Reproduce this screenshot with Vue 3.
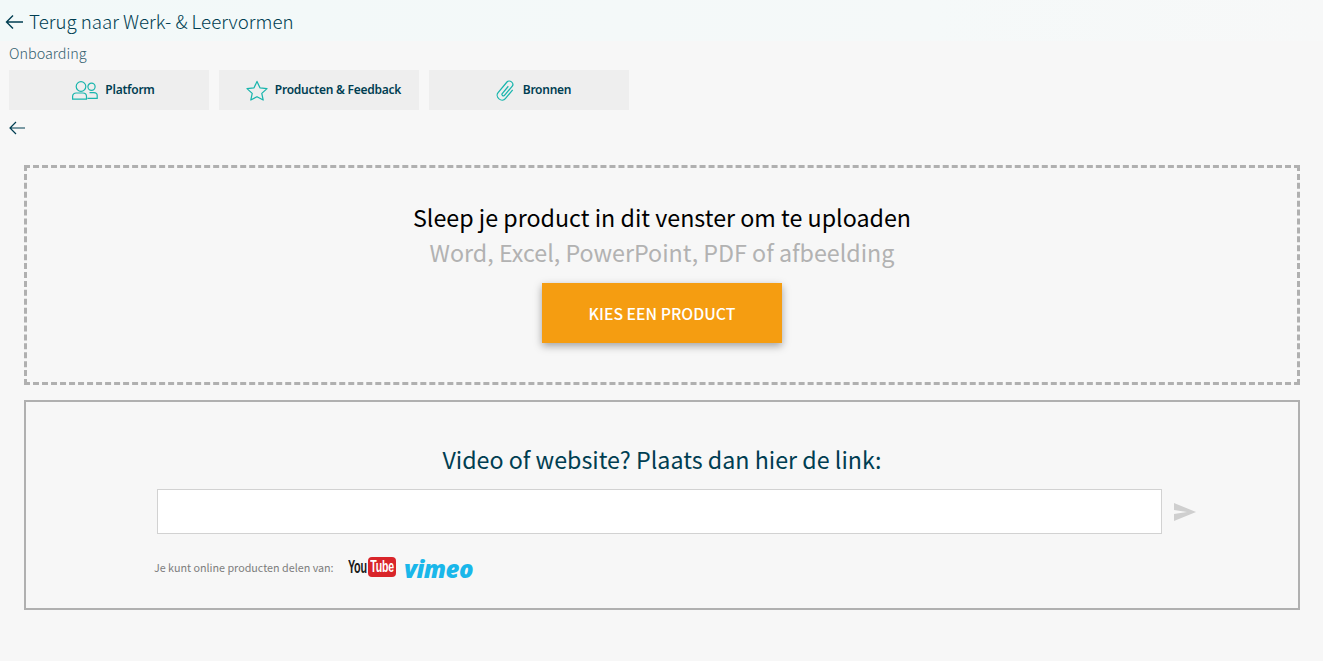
<script setup>
const tabs = [
  { label: 'Platform', icon: 'users' },
  { label: 'Producten & Feedback', icon: 'star' },
  { label: 'Bronnen', icon: 'clip' }
]
</script>

<template>
  <div class="page">
    <header class="top">
      <svg class="back-big" width="19" height="16" viewBox="0 0 19 16"><path d="M18 8H1.500M8 1.500 1.500 8 8 14.500" fill="none" stroke="#003e52" stroke-width="1.400"/></svg>
      <span class="top-link">Terug naar Werk- &amp; Leervormen</span>
    </header>
    <div class="crumb">Onboarding</div>
    <nav class="tabs">
      <div v-for="t in tabs" :key="t.label" class="tab">
        <svg v-if="t.icon === 'users'" width="26" height="20" viewBox="0 0 26 20" fill="none" stroke="#19b5ad" stroke-width="1.200">
          <circle cx="9" cy="6.500" r="4.800"/>
          <path d="M.6 19.200v-2.700c0-2.200 1.600-3.500 3.500-3.500h6.800c2 0 3.600 1.300 3.600 3.500v2.700z"/>
          <circle cx="19.500" cy="6.800" r="3.600"/>
          <path d="M17.500 12.600h4.300c2 0 3.400 1.200 3.400 3v2.700h-9.800"/>
        </svg>
        <svg v-else-if="t.icon === 'star'" width="22" height="21" viewBox="0 0 23 22" fill="none" stroke="#19b5ad" stroke-width="1.300">
          <path d="M11.500 1.500 14.600 8.200 22 9 16.500 14 18 21 11.500 17.500 5 21 6.500 14 1 9 8.400 8.200z" stroke-linejoin="round"/>
        </svg>
        <svg v-else width="20" height="21" viewBox="0 0 20 21" fill="none" stroke="#19b5ad" stroke-width="1.200">
          <path transform="translate(10 10.500) rotate(40) scale(1.050 .95) translate(-6 -12)" d="M10.500 7V19a4.500 4.500 0 0 1-9 0V4.500a3.200 3.200 0 0 1 6.400 0V17a1.400 1.400 0 0 1-2.800 0V7"/>
        </svg>
        <span>{{ t.label }}</span>
      </div>
    </nav>
    <div class="back-row">
      <svg width="16" height="14" viewBox="0 0 16 14"><path d="M16 7H1M7 1 1 7l6 6" fill="none" stroke="#003e52" stroke-width="1.200"/></svg>
    </div>
    <main class="content">
      <section class="drop">
        <h2 class="drop-title">Sleep je product in dit venster om te uploaden</h2>
        <p class="drop-sub">Word, Excel, PowerPoint, PDF of afbeelding</p>
        <button class="choose">KIES EEN PRODUCT</button>
      </section>
      <section class="link-box">
        <h2 class="link-title">Video of website? Plaats dan hier de link:</h2>
        <div class="input-row">
          <div class="input"></div>
          <svg class="send" width="22" height="18" viewBox="0 0 22 18"><path d="M0 0 22 9 0 18 0 11 13 9 0 7z" fill="#cfcfcf"/></svg>
        </div>
        <div class="share">
          <span class="share-text">Je kunt online producten delen van:</span>
          <span class="yt"><span class="yt-you">You</span><span class="yt-tube"><span class="yt-tube-text">Tube</span></span></span>
          <span class="vimeo">vimeo</span>
        </div>
      </section>
    </main>
  </div>
</template>

<style>
html, body { background: #f7f7f7; }
</style>

<style scoped>
.page {
  width: 1323px;
  height: 661px;
  overflow: hidden;
  background: #f7f7f7;
  font-family: "Noto Sans CJK SC", "Noto Sans", sans-serif;
  color: #003e52;
}
.top {
  height: 41px;
  box-sizing: border-box;
  display: flex;
  align-items: center;
  gap: 5px;
  padding: 2px 0 0 5px;
  background: linear-gradient(90deg, #f2f9f9, #f5f9f9 70%, #f7f8f8);
}
.top-link { font-size: 18.700px; font-weight: 300; line-height: 22px; margin-bottom: 2px; }
.crumb { padding-left: 9px; height: 29px; font-size: 14.400px; font-weight: 300; line-height: 24px; color: #34606f; }
.tabs { display: flex; gap: 10px; padding-left: 9px; }
.tab {
  width: 200px;
  height: 40px;
  box-sizing: border-box;
  padding-left: 9px;
  background: #eeeeee;
  display: flex;
  align-items: center;
  justify-content: center;
  gap: 7px;
  font-family: "Noto Sans", sans-serif;
  font-size: 12px;
  letter-spacing: -.25px;
  font-weight: 600;
}
.tab span { position: relative; top: -1px; }
.back-row { height: 36px; padding: 11px 0 0 9px; box-sizing: border-box; line-height: 0; }
.content { padding: 19px 23px 0 24px; }
.drop {
  height: 220px;
  box-sizing: border-box;
  border: 3px dashed #b0b0b0;
  display: flex;
  flex-direction: column;
  align-items: center;
  padding-top: 32px;
}
.drop-title { margin: 0; font-size: 23.250px; font-weight: 400; line-height: 35px; color: #000; }
.drop-sub { margin: 0; font-size: 23.250px; font-weight: 400; line-height: 34px; color: #b2b2b2; }
.choose {
  margin-top: 14px;
  width: 240px;
  height: 60px;
  border: 0;
  background: #f59d11;
  color: #fff;
  font: 500 15.800px "Noto Sans CJK SC", sans-serif;
  box-shadow: 0 3px 8px rgba(0, 0, 0, .35);
}
.link-box {
  margin-top: 15px;
  height: 210px;
  box-sizing: border-box;
  border: 2px solid #b0b0b0;
  padding: 40px 0 0 130px;
}
.link-title { margin: 0; text-align: center; font-size: 23.250px; font-weight: 400; line-height: 34px; color: #003e52; margin-left: -130px; }
.input-row { display: flex; align-items: center; margin-top: 13px; gap: 12px; }
.input { width: 1003px; height: 43px; margin-left: 1px; background: #fff; border: 1px solid #d2d2d2; }
.share { display: flex; align-items: center; margin-top: 21px; margin-left: -2px; height: 24px; }
.share-text { font-size: 10.750px; color: #7d7d7d; width: 194px; }
.yt { display: inline-flex; align-items: center; width: 56px; height: 24px; font-family: "Liberation Sans", sans-serif; font-weight: 700; line-height: 20px; }
.yt-you { color: #1a1a1a; display: inline-block; font-size: 18px; transform: scaleX(.6); transform-origin: left center; width: 20px; letter-spacing: -.5px; }
.yt-tube { display: inline-block; background: #d9252a; color: #fff; border-radius: 4px; width: 28px; height: 20px; text-align: center; }
.yt-tube-text { display: inline-block; font-size: 17px; letter-spacing: -.3px; transform: scaleX(.62); transform-origin: center; margin: 0 -8px; }
.vimeo { font-family: "Open Sans", sans-serif; font-weight: 800; font-style: italic; font-size: 24px; letter-spacing: -.5px; color: #1ab7ea; line-height: 27px; height: 24px; }
</style>
